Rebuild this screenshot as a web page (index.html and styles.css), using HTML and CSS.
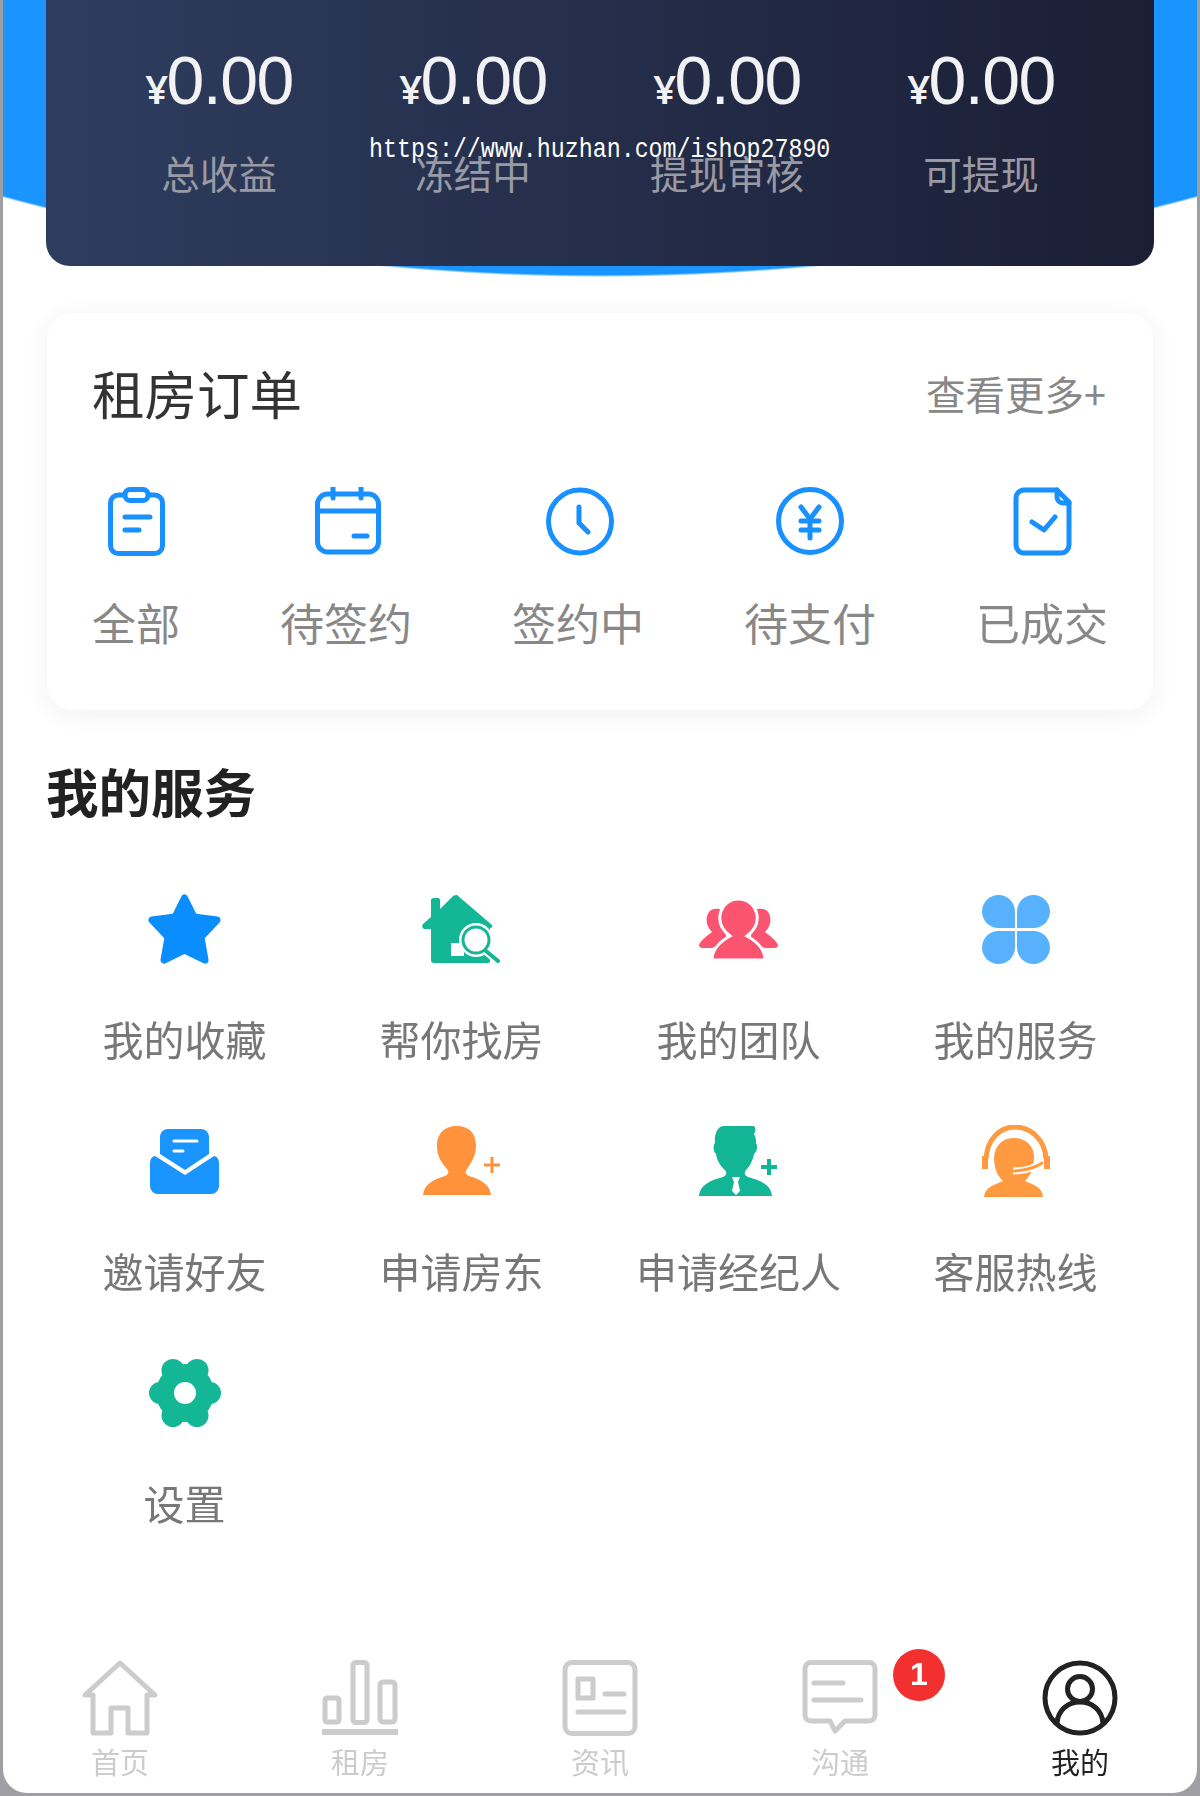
FILE: index.html
```html
<!DOCTYPE html>
<html lang="zh-CN">
<head>
  <meta charset="UTF-8">
  <meta name="viewport" content="width=device-width, initial-scale=1.0">
  <title>我的</title>
  <link rel="stylesheet" href="styles.css">
</head>
<body>

  <main class="phone">
    <section class="hero">
      <div class="wallet">
        <div class="stat"><p class="money"><small>¥</small>0.00</p><p class="stat-name">总收益</p></div>
        <div class="stat"><p class="money"><small>¥</small>0.00</p><p class="stat-name">冻结中</p></div>
        <div class="stat"><p class="money"><small>¥</small>0.00</p><p class="stat-name">提现审核</p></div>
        <div class="stat"><p class="money"><small>¥</small>0.00</p><p class="stat-name">可提现</p></div>
      </div>
      <div class="mark">https://www.huzhan.com/ishop27890</div>
    </section>

    <section class="orders">
      <div class="orders-head">
        <h2>租房订单</h2>
        <a class="more">查看更多+</a>
      </div>
      <div class="order-row">
        <div class="order">
          <svg width="57" height="69" viewBox="0 0 57 69" class="line-icon"><rect x="2.5" y="8" width="52" height="58.5" rx="8"/><rect x="17" y="2.5" width="23" height="11" rx="5" fill="#fff"/><path d="M17 30H42M17 43H31"/></svg>
          <span>全部</span>
        </div>
        <div class="order">
          <svg width="66" height="69" viewBox="0 0 66 69" class="line-icon nudge"><rect x="2.5" y="7" width="61" height="58" rx="10"/><path d="M3 24H63M18 1V11M46 1V11M39 49H52"/></svg>
          <span>待签约</span>
        </div>
        <div class="order">
          <svg width="68" height="69" viewBox="0 0 68 69" class="line-icon nudge"><circle cx="34" cy="34.5" r="31.5"/><path d="M33 20V36L42 45"/></svg>
          <span>签约中</span>
        </div>
        <div class="order">
          <svg width="68" height="69" viewBox="0 0 68 69" class="line-icon"><circle cx="34" cy="34" r="31.5"/><path d="M25 20L34 32L43 20M34 32V51M25 34H43M25 43H43"/></svg>
          <span>待支付</span>
        </div>
        <div class="order">
          <svg width="59" height="69" viewBox="0 0 59 69" class="line-icon"><path d="M11 3H44L56 15V58A8 8 0 0 1 48 66H11A8 8 0 0 1 3 58V11A8 8 0 0 1 11 3Z"/><path d="M44 3V10A6 6 0 0 0 50 16H56M19 35L31 43L42 30"/></svg>
          <span>已成交</span>
        </div>
      </div>
    </section>

    <section class="services">
      <h2>我的服务</h2>
      <div class="service-grid">
        <div class="service">
          <div class="service-icon">
            <svg width="75" height="72" viewBox="0 0 75 72"><path d="M37.5 5L47 24L70 27L54 44L58 67L37.5 57L17 67L21 44L5 27L28 24Z" fill="#0a8dff" stroke="#0a8dff" stroke-width="7" stroke-linejoin="round"/></svg>
          </div>
          <span>我的收藏</span>
        </div>
        <div class="service">
          <div class="service-icon">
            <svg width="79" height="68" viewBox="0 0 79 68"><path d="M35 0L70 30Q71 33 68 33V66Q68 68 65 68H12Q9 68 9 65V34H2Q-1 32 1 29L9 22V5Q9 3 12 3H16Q18 3 18 5V14L31 1Q33 0 35 0Z" fill="#13b795"/><rect x="29" y="48" width="13" height="13" fill="#fff"/><path d="M64 56L77 67" stroke="#fff" stroke-width="8"/><circle cx="54" cy="45" r="17" fill="#fff"/><circle cx="54" cy="45" r="13" fill="#fff" stroke="#13b795" stroke-width="3"/><path d="M64 56L76 66" stroke="#13b795" stroke-width="4" stroke-linecap="round"/></svg>
          </div>
          <span>帮你找房</span>
        </div>
        <div class="service">
          <div class="service-icon">
            <svg width="79" height="62" viewBox="0 0 79 62"><path d="M0 47C2 42 8 38 13 34C7 28 6 20 10 14C13 10 19 10 23 12L28 44L13 50H4Q0 50 0 47ZM79 47C77 42 71 38 66 34C72 28 73 20 69 14C66 10 60 10 56 12L51 44L66 50H75Q79 50 79 47Z" fill="#fb5470"/><path d="M13 62C13 50 22 43 31 38C23 32 20 24 21 17C23 7 30 1 39.500 1C49 1 56 7 58 17C59 24 56 32 48 38C57 43 66 50 66 62Z" fill="#fb5470" stroke="#fff" stroke-width="3"/></svg>
          </div>
          <span>我的团队</span>
        </div>
        <div class="service">
          <div class="service-icon">
            <svg width="68" height="69" viewBox="0 0 68 69" fill="#58b1fd"><path d="M33 33H16.500A16.500 16.500 0 1 1 33 16.500Z"/><path d="M35 33H51.500A16.500 16.500 0 1 0 35 16.500Z"/><path d="M33 36H16.500A16.500 16.500 0 1 0 33 52.500Z"/><path d="M35 36H51.500A16.500 16.500 0 1 1 35 52.500Z"/></svg>
          </div>
          <span>我的服务</span>
        </div>
        <div class="service">
          <div class="service-icon">
            <svg width="70" height="65" viewBox="0 0 70 65"><path d="M10 8A8 8 0 0 1 18 0H51A8 8 0 0 1 59 8V25L35 41L10 25Z" fill="#1a94ff"/><path d="M0 34Q0 28 5 27L35 46L64 27Q69 28 69 34V57A8 8 0 0 1 61 65H8A8 8 0 0 1 0 57Z" fill="#1a94ff"/><path d="M24 12H47M24 22H33" stroke="#fff" stroke-width="3" stroke-linecap="round"/></svg>
          </div>
          <span>邀请好友</span>
        </div>
        <div class="service">
          <div class="service-icon">
            <svg width="78" height="70" viewBox="0 0 78 70"><path d="M0 69C1 58 10 54 22 50C26 48 26 46 24 43C18 36 14 30 14 20C14 6 23 0 34 0C45 0 53 6 53 20C53 30 48 37 44 43C42 46 42 48 46 50C58 54 67 58 68 69Z" fill="#ff923a"/><path d="M61 39H77M69 31V47" stroke="#ff923a" stroke-width="3"/></svg>
          </div>
          <span>申请房东</span>
        </div>
        <div class="service">
          <div class="service-icon">
            <svg width="80" height="72" viewBox="0 0 80 72"><path d="M0 71C1 60 10 56 24 52C28 50 28 48 26 45C21 41 18 35 17 29C14 27 14 20 16 18C15 10 18 2 24 1H54C57 1 57 6 55 9C57 12 57 16 57 18C59 21 58 27 55 29C54 35 51 41 47 45C45 48 45 50 49 52C63 56 72 60 73 71Z" fill="#12b696"/><path d="M33 52H41L39 57L41 66L37 70L33 66L35 57Z" fill="#fff"/><path d="M62 42H78M70 34V50" stroke="#12b696" stroke-width="4"/></svg>
          </div>
          <span>申请经纪人</span>
        </div>
        <div class="service">
          <div class="service-icon">
            <svg width="68" height="72" viewBox="0 0 68 72"><path d="M4 34C5 14 18 2 33 2C48 2 63 14 64 34" fill="none" stroke="#ff9a40" stroke-width="5"/><path d="M0 31H6V44H0ZM62 31H68V44H62Z" fill="#ff9a40"/><path d="M2 72C3 62 12 60 21 56C14 50 12 40 12 32C13 20 21 13 32 13C43 13 52 20 52 32C52 40 50 50 43 56C52 60 60 62 61 72Z" fill="#ff9a40"/><path d="M31 46Q50 46 60 37" fill="none" stroke="#fff" stroke-width="7"/><path d="M32 46Q50 45 60 38" fill="none" stroke="#ff9a40" stroke-width="3" stroke-linecap="round"/></svg>
          </div>
          <span>客服热线</span>
        </div>
        <div class="service">
          <div class="service-icon">
            <svg width="72" height="68" viewBox="0 0 72 68" fill="#13b795"><circle cx="36" cy="34" r="29"/><circle cx="11" cy="34" r="11"/><circle cx="61" cy="34" r="11"/><circle cx="24" cy="11.500" r="11.500"/><circle cx="48" cy="11.500" r="11.500"/><circle cx="24" cy="56.500" r="11.500"/><circle cx="48" cy="56.500" r="11.500"/><circle cx="36" cy="34" r="11" fill="#fff"/></svg>
          </div>
          <span>设置</span>
        </div>
      </div>
    </section>

    <nav class="tabbar">
      <a class="tab">
        <svg width="76" height="76" viewBox="0 0 76 76"><path d="M38 3L73 35H65V73H46V48H29V73H11V35H3Z"/></svg>
        <span>首页</span>
      </a>
      <a class="tab">
        <svg width="76" height="76" viewBox="0 0 76 76"><rect x="3" y="38" width="14" height="24" rx="2"/><rect x="31" y="2.500" width="14" height="60" rx="3"/><rect x="58" y="22" width="15" height="40" rx="3"/><path d="M1 72H75" stroke-width="6"/></svg>
        <span>租房</span>
      </a>
      <a class="tab">
        <svg width="76" height="76" viewBox="0 0 76 76"><rect x="3" y="2.500" width="70" height="71" rx="7"/><rect x="16" y="19" width="15" height="19"/><path d="M43 34H62M16 52H62"/></svg>
        <span>资讯</span>
      </a>
      <a class="tab">
        <svg width="76" height="76" viewBox="0 0 76 76"><path d="M9 2.500H67A6 6 0 0 1 73 8.500V55A6 6 0 0 1 67 61H43L33 71L28 61H9A6 6 0 0 1 3 55V8.500A6 6 0 0 1 9 2.500Z"/><path d="M12 23H41M12 40H59"/></svg>
        <span>沟通</span>
        <b class="badge">1</b>
      </a>
      <a class="tab active">
        <svg width="76" height="76" viewBox="0 0 76 76"><circle cx="38" cy="38" r="35"/><circle cx="38" cy="29" r="12.500"/><path d="M15 63C16 50 26 42 38 42C50 42 60 50 61 63"/></svg>
        <span>我的</span>
      </a>
    </nav>
  </main>

</body>
</html>
```

FILE: styles.css
```css
* {
  box-sizing: border-box;
}
html, body {
  margin: 0;
  height: 1796px;
  overflow: hidden;
}
body {
  background-color: #9f9fa3;
  font-family: "Noto Sans CJK SC", "Noto Sans", sans-serif;
}
h2, p {
  margin: 0;
  font-weight: normal;
}
.phone {
  display: flex;
  flex-direction: column;
  height: 1793px;
  margin: 0 3px;
  background-color: white;
  border-radius: 0 0 24px 24px;
  overflow: hidden;
  filter: blur(0.6px);
}

/* top part */
.hero {
  position: relative;
  height: 277px;
  padding: 0 43px;
  background: radial-gradient(circle 2290px at 50% -2013px, #1a94ff 99.9%, transparent 100%);
}
.wallet {
  display: grid;
  grid-template-columns: repeat(4, 1fr);
  height: 266px;
  padding: 0 46px;
  background: linear-gradient(90deg, #2e3d5f, #1b1e35);
  border-radius: 0 0 24px 24px;
}
.stat {
  text-align: center;
}
.money {
  margin-top: 36px;
  color: #f2f2f4;
  font-family: "Liberation Sans", sans-serif;
  font-size: 68px;
  line-height: 88px;
  letter-spacing: -1.5px;
}
.money small {
  font-size: 40px;
  font-weight: 600;
  font-family: "Noto Sans", sans-serif;
}
.stat-name {
  margin-top: 14px;
  color: #9a9aa4;
  font-size: 38.5px;
  line-height: 50px;
}
.mark {
  position: absolute;
  top: 133px;
  left: 366px;
  color: white;
  font-family: "Liberation Mono", monospace;
  font-size: 23.3px;
  line-height: 34px;
  white-space: nowrap;
  transform: scaleY(1.2);
}

/* rent orders */
.orders {
  height: 397px;
  margin: 36px 44px 0;
  padding: 41px 47px 0 45px;
  background-color: white;
  border-radius: 26px;
  box-shadow: 0 4px 24px rgba(40, 50, 90, 0.07);
}
.orders-head {
  display: flex;
  justify-content: space-between;
  align-items: center;
}
.orders-head h2 {
  color: #333;
  font-size: 52.5px;
  line-height: 76px;
}
.more {
  color: #888;
  font-size: 39.5px;
}
.order-row {
  display: flex;
  justify-content: space-between;
  margin-top: 57px;
  margin-right: -2px;
}
.order {
  display: flex;
  flex-direction: column;
  align-items: center;
  color: #888;
  font-size: 44px;
  line-height: 60px;
}
.order span {
  margin-top: 36px;
}
.line-icon {
  fill: none;
  stroke: #1890ff;
  stroke-width: 5;
  stroke-linecap: round;
  stroke-linejoin: round;
}
.nudge {
  margin-left: 4px;
}

/* services */
.services {
  padding: 0 43px;
}
.services h2 {
  margin-top: 42px;
  color: #222;
  font-size: 52.5px;
  font-weight: bold;
  line-height: 76px;
}
.service-grid {
  display: grid;
  grid-template-columns: repeat(4, 1fr);
  grid-auto-rows: 232px;
  margin-top: 63px;
}
.service {
  display: flex;
  flex-direction: column;
  align-items: center;
  color: #777;
  font-size: 41px;
  line-height: 56px;
}
.service-icon {
  display: flex;
  justify-content: center;
  align-items: center;
  height: 76px;
  margin-bottom: 43px;
}

/* bottom bar */
.tabbar {
  display: grid;
  grid-template-columns: repeat(5, 1fr);
  height: 133px;
  margin: auto -3px 0;
}
.tab {
  position: relative;
  display: flex;
  flex-direction: column;
  align-items: center;
  color: #ccc;
  font-size: 29px;
  line-height: 40px;
}
.tab svg {
  margin-bottom: 5px;
  fill: none;
  stroke: #ccc;
  stroke-width: 5;
  stroke-linejoin: round;
  stroke-linecap: round;
}
.tab.active {
  color: #222;
}
.tab.active svg {
  stroke: #222;
}
.badge {
  position: absolute;
  top: -11px;
  left: 173px;
  width: 52px;
  height: 52px;
  border-radius: 50%;
  background-color: #f33030;
  color: white;
  font-family: "Liberation Sans", sans-serif;
  font-size: 32px;
  line-height: 50px;
  text-align: center;
}
```
